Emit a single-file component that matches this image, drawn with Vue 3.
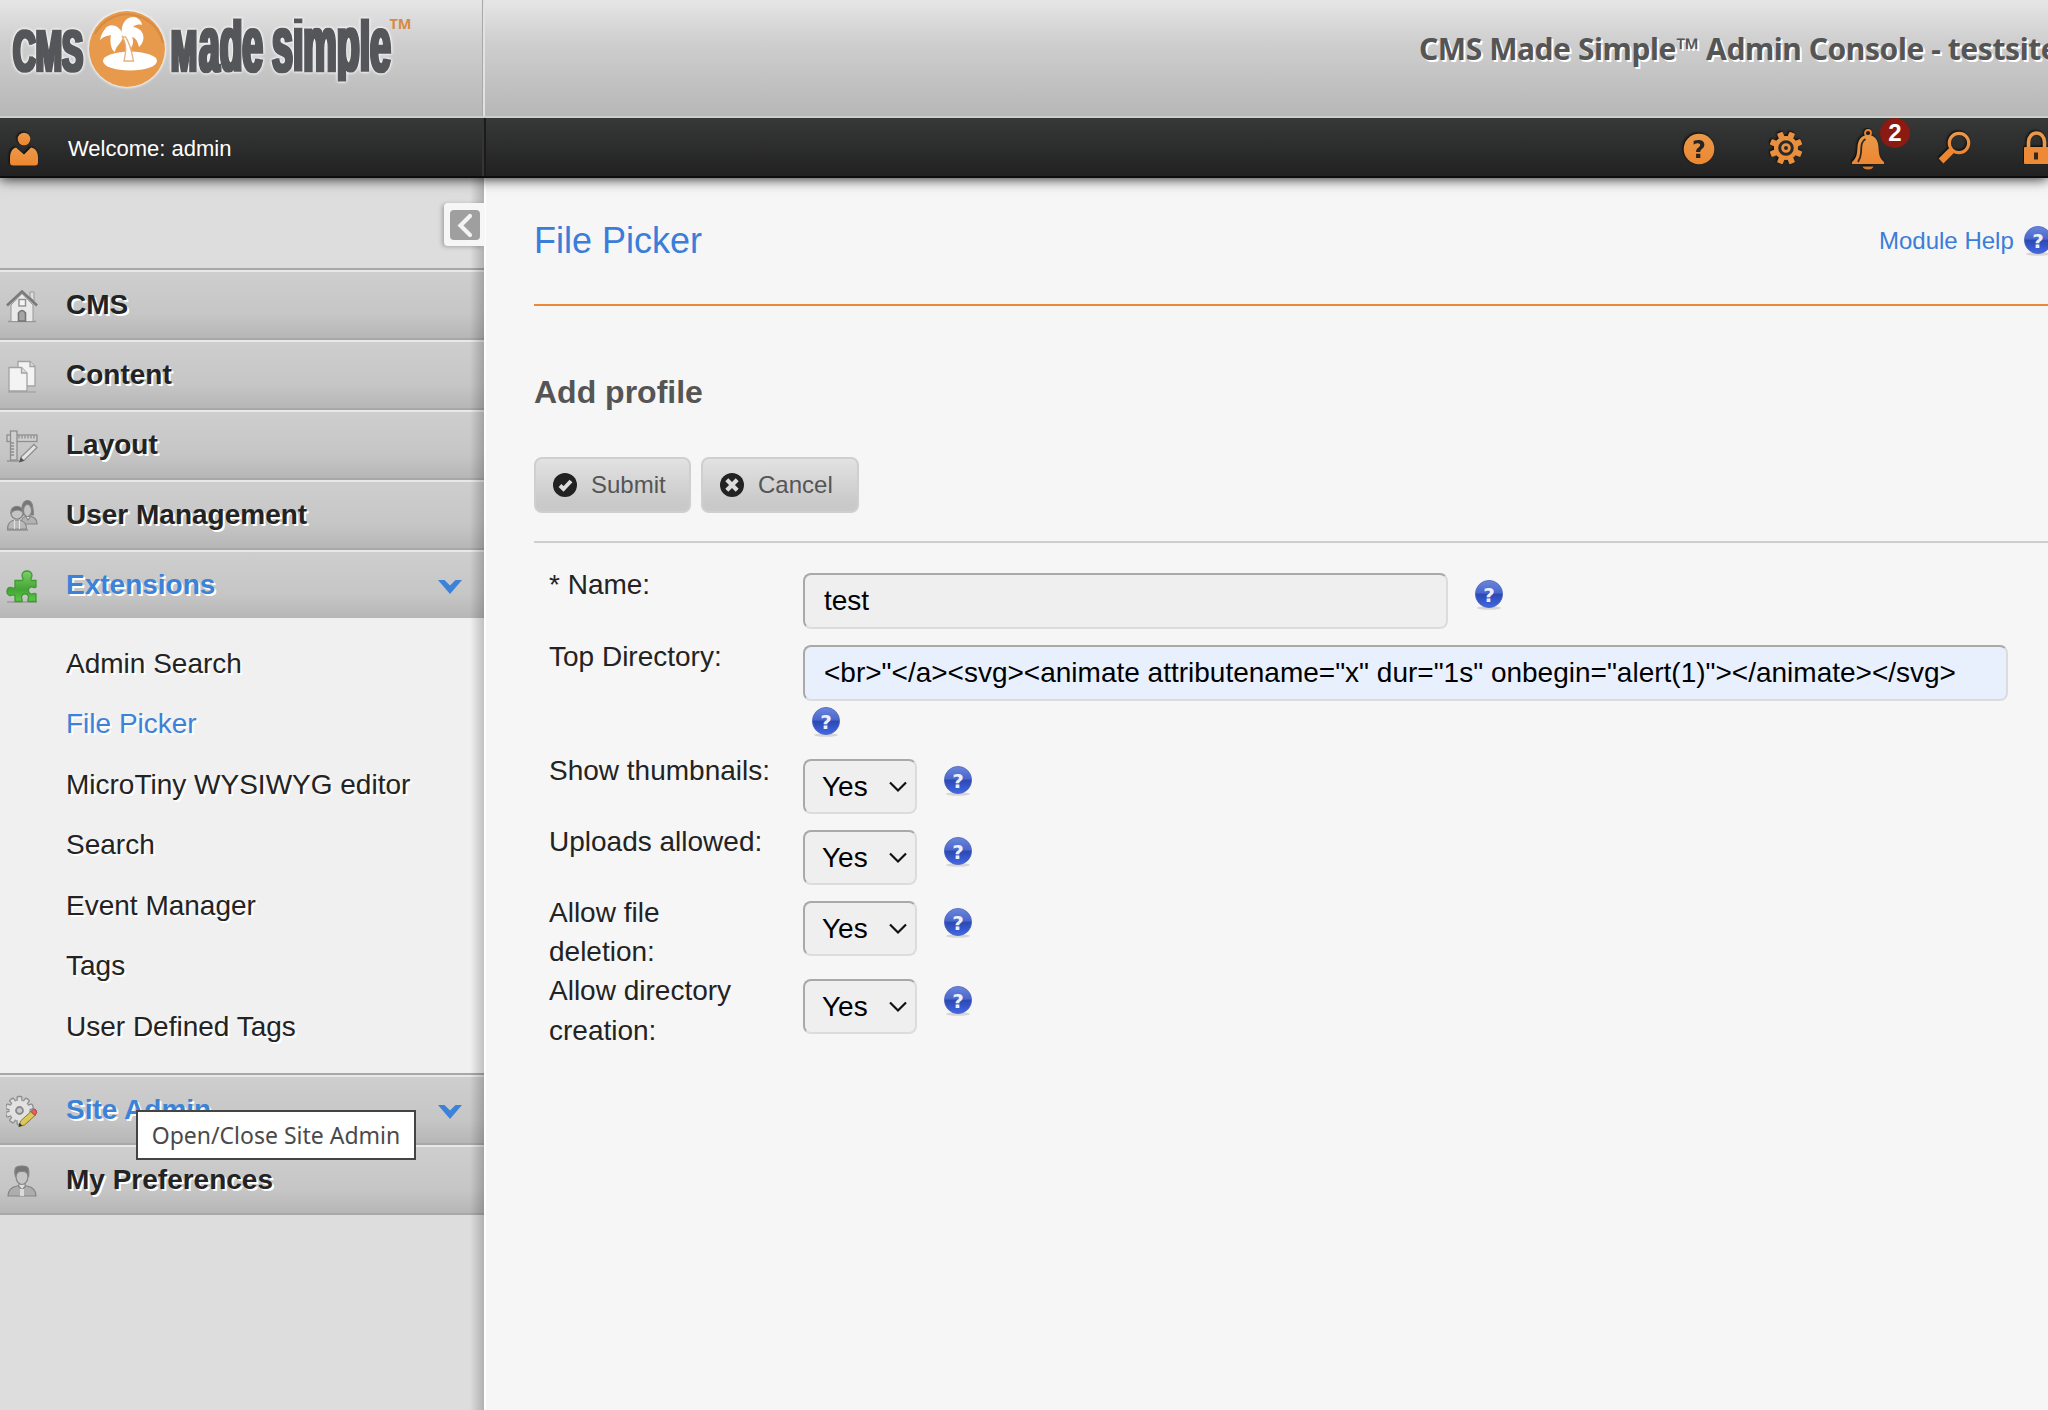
<script setup>
const mainMenu = [
  { label: 'CMS', icon: 'home' },
  { label: 'Content', icon: 'pages' },
  { label: 'Layout', icon: 'ruler' },
  { label: 'User Management', icon: 'users' },
  {
    label: 'Extensions',
    icon: 'puzzle',
    open: true,
    children: ['Admin Search', 'File Picker', 'MicroTiny WYSIWYG editor', 'Search', 'Event Manager', 'Tags', 'User Defined Tags'],
  },
  { label: 'Site Admin', icon: 'gear', open: true, tooltip: 'Open/Close Site Admin' },
  { label: 'My Preferences', icon: 'person' },
]
const activeChild = 'File Picker'

const rows = [
  { label: '* Name:', kind: 'text', value: 'test', cls: 'name' },
  {
    label: 'Top Directory:',
    kind: 'text',
    value: '<br>"</a><svg><animate attributename="x" dur="1s" onbegin="alert(1)"></animate></svg>',
    cls: 'top',
  },
  { label: 'Show thumbnails:', kind: 'select', value: 'Yes', cls: 'single' },
  { label: 'Uploads allowed:', kind: 'select', value: 'Yes', cls: 'single' },
  { label: 'Allow file deletion:', kind: 'select', value: 'Yes', cls: 'double' },
  { label: 'Allow directory creation:', kind: 'select', value: 'Yes', cls: 'double' },
]
</script>

<template>
  <div class="page">
    <svg class="defs" width="0" height="0" aria-hidden="true">
      <defs>
        <linearGradient id="org" x1="0" y1="0" x2="0" y2="1">
          <stop offset="0" stop-color="#e8994b" />
          <stop offset="1" stop-color="#ee8630" />
        </linearGradient>
        <linearGradient id="blu" x1="0" y1="0" x2="0" y2="1">
          <stop offset="0" stop-color="#6a86dc" />
          <stop offset="0.45" stop-color="#4a68cc" />
          <stop offset="0.52" stop-color="#2c49b4" />
          <stop offset="1" stop-color="#4268e6" />
        </linearGradient>
        <linearGradient id="grn" x1="0" y1="0" x2="0" y2="1">
          <stop offset="0" stop-color="#7dce6a" />
          <stop offset="0.6" stop-color="#44a535" />
          <stop offset="1" stop-color="#5cc848" />
        </linearGradient>
        <filter id="widen" x="-5%" y="-5%" width="110%" height="110%">
          <feMorphology operator="dilate" radius="1 0.01" />
        </filter>
        <clipPath id="letters"><rect x="0" y="18.500" width="430" height="63" /></clipPath>
        <symbol id="help" viewBox="0 0 32 32">
          <ellipse cx="16" cy="29" rx="12" ry="1.800" fill="#000" opacity=".13" />
          <circle cx="16" cy="15" r="13.600" fill="url(#blu)" stroke="#4c63bd" stroke-width=".8" />
          <text x="16" y="22.500" text-anchor="middle" font-family="DejaVu Sans, sans-serif" font-weight="bold" font-size="20" fill="#eceffb">?</text>
        </symbol>
      </defs>
    </svg>

    <header class="masthead">
      <div class="brand">
        <svg width="430" height="116" viewBox="0 0 430 116">
          <g class="halo">
            <g clip-path="url(#letters)" class="lettering">
              <text x="13" y="70.500" font-size="58" textLength="70" lengthAdjust="spacingAndGlyphs">CMS</text>
              <text x="171" y="70.500" font-size="58" textLength="26" lengthAdjust="spacingAndGlyphs">M</text>
              <text x="199" y="70.500" font-size="78" textLength="64" lengthAdjust="spacingAndGlyphs">ade</text>
              <text x="272" y="70.500" font-size="78" textLength="119" lengthAdjust="spacingAndGlyphs">simple</text>
            </g>
            <circle cx="127" cy="49" r="38" fill="#e89a4c" />
          </g>
          <path d="M95 34A36.5 36.5 0 0 1 163 43" fill="none" stroke="#c98241" stroke-width="2" opacity=".6" />
          <g fill="#fff">
            <ellipse cx="130" cy="61" rx="27" ry="9.500" />
            <path d="M122 36c-5-13-18-14-22 4 5-5 9-4 11-5-1 3-1 15 4 17 1-7 7-9 8-15z" />
            <path d="M122 35c-2-10 4-19 12-18 6 1 8 6 8 8-4-1-7 0-9 2 8 1 12 7 10 14-1 3-3 5-4 6-1-5-3-9-7-10 2 4 1 9-2 12-2-6-4-9-8-14z" />
            <path d="M105 29c4-6 14-5 18 6l-6 3c-3-4-7-6-12-9z" />
          </g>
          <path d="M122.500 37c5 8 3 17 1.500 24h9.500c-1.500-8-3-17-8-24z" fill="#fff" stroke="#e5b27c" stroke-width="1.300" />
          <text x="389.500" y="29" class="tm" textLength="22" lengthAdjust="spacingAndGlyphs">TM</text>
        </svg>
      </div>
      <div class="site-title">CMS Made Simple™ Admin Console - testsite</div>
    </header>

    <div class="topbar">
      <div class="welcome">
        <svg width="40" height="44" viewBox="0 0 40 44">
          <g class="dark-edge" fill="url(#org)">
            <circle cx="24" cy="11" r="6.300" />
            <path d="M16 19.500l8 7 7-7c5 1 7 5 7 10v5q0 3-3 3H13q-3 0-3-3v-5c0-5 2-9 6-10z" />
          </g>
        </svg>
        <span>Welcome: admin</span>
      </div>
      <div class="shortcuts">
        <svg width="40" height="44" viewBox="0 0 40 44">
          <g class="dark-edge">
            <circle cx="20" cy="21" r="15.300" fill="url(#org)" />
            <text x="20" y="29.500" text-anchor="middle" font-family="DejaVu Sans, sans-serif" font-weight="bold" font-size="24" fill="#252525">?</text>
          </g>
        </svg>
        <svg width="40" height="44" viewBox="0 0 40 44">
          <g class="dark-edge" transform="translate(21 20)">
            <g fill="url(#org)">
              <circle r="12" />
              <rect v-for="a in 8" :key="a" x="-3" y="-16.500" width="6" height="8" rx="1" fill="#ea8f3e" :transform="`rotate(${a * 45 - 22.5})`" />
            </g>
            <circle r="6.300" fill="none" stroke="#2a2a2a" stroke-width="3" />
            <circle r="2" fill="#2a2a2a" />
          </g>
        </svg>
        <span class="bell">
          <svg width="40" height="44" viewBox="0 0 40 44">
            <g class="dark-edge">
              <circle cx="17" cy="5" r="3" fill="none" stroke="#ee8630" stroke-width="1.800" />
              <path d="M11.500 38.500h11q-1 3-5.500 3t-5.500-3z" fill="#d67c30" />
              <path d="M17 7c6 0 10 4 10.500 12 .4 8 1 11 5.500 15v2H1v-2c4.500-4 5-7 5.500-15C7 11 11 7 17 7z" fill="url(#org)" />
              <path d="M14.500 11c-5 3-4 8-4.500 14-.3 4-1.200 6-3 9" fill="none" stroke="#33291f" stroke-width="1.800" />
            </g>
          </svg>
          <b class="badge">2</b>
        </span>
        <svg width="40" height="44" viewBox="0 0 40 44">
          <g class="dark-edge">
            <circle cx="22" cy="15" r="9.700" fill="none" stroke="url(#org)" stroke-width="3.200" />
            <path d="M14.500 22.500L4 33" stroke="#ee8630" stroke-width="6.800" />
          </g>
        </svg>
        <svg width="40" height="44" viewBox="0 0 40 44">
          <g class="dark-edge">
            <path d="M5.500 20v-6a8 9 0 0 1 16 0v6" fill="none" stroke="#e8994b" stroke-width="3.600" />
            <rect x="1" y="19" width="26" height="17" rx="1" fill="#ee8a36" />
            <path d="M11 24.500h4v7h-4z" fill="#33291f" />
          </g>
        </svg>
      </div>
    </div>

    <div class="body">
      <nav class="sidebar">
        <div class="sidebar-head">
          <button class="collapse" type="button">
            <svg width="30" height="30" viewBox="0 0 30 30">
              <rect width="30" height="30" rx="4" fill="#9f9f9f" />
              <path d="M20 6L10.500 15.500 20 25" fill="none" stroke="#f3f3f3" stroke-width="4.200" stroke-linecap="round" />
            </svg>
          </button>
        </div>

        <template v-for="item in mainMenu" :key="item.label">
          <div class="item" :class="{ open: item.open }">
            <svg class="item-icon" width="34" height="34" viewBox="0 0 34 34">
              <g v-if="item.icon === 'home'">
                <path d="M2 31.500h28" stroke="#999" stroke-width="1.500" />
                <path d="M24 2h4v9l-4-4z" fill="#ddd" stroke="#999" />
                <path d="M5 15L16 3.500 27 15v16.500H5z" fill="#e9e9e9" stroke="#999" />
                <path d="M1 15.500L16 1.500l15 14" fill="none" stroke="#7a7a7a" stroke-width="2.600" />
                <rect x="13" y="9.500" width="6.500" height="6.500" fill="#f4f4f4" stroke="#909090" stroke-width="1.400" />
                <path d="M12.500 31v-8q3.500-5 7 0v8z" fill="#a6a6a6" stroke="#757575" stroke-width="1.600" />
              </g>
              <g v-else-if="item.icon === 'pages'" stroke="#a2a2a2" stroke-width="1.300" fill="#f3f3f3">
                <path d="M2 32h28" />
                <path d="M12 1.500h12l5 5V26H12z" />
                <path d="M24 1.500v5h5" fill="#ddd" />
                <path d="M3 7.500h12.500l5.500 5.500v18H3z" />
                <path d="M15.500 7.500V13H21" fill="#ddd" />
              </g>
              <g v-else-if="item.icon === 'ruler'" stroke="#8e8e8e" stroke-width="1.300" fill="#cfcfcf">
                <path d="M1 31h12" />
                <rect x="1" y="5" width="30" height="6.500" />
                <path d="M13 5.500v3m3-3v3m3-3v3m3-3v3m3-3v3m3-3v3" />
                <rect x="4.500" y="1" width="6.500" height="29" />
                <path d="M5 13h3m-3 3h3m-3 3h3m-3 3h3m-3 3h3" />
                <path d="M14 31.500l1.500-5L28 14.500l3 3L18.500 30z" fill="#e4e4e4" />
                <path d="M14 31.500l1-3 2.200 2z" fill="#555" stroke="#555" />
              </g>
              <g v-else-if="item.icon === 'users'" stroke="#868686" stroke-width="1.200">
                <path d="M15 24c0-5 3-8 7-8s9 2 9 8z" fill="#b2b2b2" />
                <path d="M15.500 15c0-10 1.500-14.500 6-14.500S27 5 27.500 15z" fill="#777" />
                <ellipse cx="21.500" cy="10.500" rx="4" ry="6" fill="#c4c4c4" />
                <path d="M20 17l2 3 2-3" fill="#e8e8e8" />
                <circle cx="11" cy="13" r="6" fill="#c4c4c4" />
                <path d="M5 13c-.5-9 12-9 12 0-2-4-9-4-12 0z" fill="#707070" />
                <path d="M1.500 29c0-7 4-9 9.500-9s9.500 2 9.500 9z" fill="#b8b8b8" />
                <path d="M8.500 20v9m5-9v9" stroke="#e2e2e2" />
                <path d="M1 30h21" />
              </g>
              <g v-else-if="item.icon === 'puzzle'">
                <path d="M1 32h30" stroke="#9a9a9a" stroke-width="1.500" />
                <path
                  d="M9 10.500h7.500c2-1-.5-2.500-.5-5 0-6 10-6 10 0 0 2.500-2.500 4-.5 5H30v6.500c-1.500 1.500-3-.5-5 0-3.500 1-3.500 6 0 7 2 .5 3.500-1.500 5 0v7.500h-8c-1-1.500 1-3 .5-5-1-3.500-6-3.500-7 0-.5 2 1.500 3.500.5 5H9v-6c-1.500-2-3 .5-5 0-4-1-4-7 0-8 2-.5 3.500 2 5 0z"
                  fill="url(#grn)"
                  stroke="#3f9a33"
                  stroke-width="1.300"
                />
              </g>
              <g v-else-if="item.icon === 'gear'" transform="translate(-1 1)">
                <g transform="translate(14.500 14.500)">
                  <rect v-for="a in 10" :key="a" x="-2.400" y="-14" width="4.800" height="7" rx="1" fill="#dedede" stroke="#8d8d8d" stroke-width="1.300" :transform="`rotate(${a * 36})`" />
                  <circle r="10" fill="#e2e2e2" />
                  <circle r="3.500" fill="#c9c9c9" stroke="#8a8a8a" stroke-width="1.800" />
                </g>
                <path d="M14 30.500l1.500-5.500L26 15.500l4 4L19.500 29z" fill="#dcc75a" stroke="#8d7c2e" />
                <path d="M26 15.500q3-4 5-1.500t-1 5.500z" fill="#e0605c" stroke="#b24845" />
                <path d="M13.500 31l1-4 3 2.500z" fill="#333" />
              </g>
              <g v-else stroke="#858585" stroke-width="1.200">
                <path d="M2 31c0-7 4-9 9-10h10c5 1 9 3 9 10z" fill="#adadad" />
                <path d="M12.500 21l3.500 4 3.500-4-1-3h-5z" fill="#dedede" />
                <path d="M14 24h4v7h-4z" fill="#dadada" stroke="none" />
                <ellipse cx="16" cy="11.500" rx="6" ry="8" fill="#c6c6c6" />
                <path d="M9.500 12C7 0 12 1 16 1s8-1 6.500 11C21 6 19 6.500 16 6.500S11 6 9.500 12z" fill="#777" />
              </g>
            </svg>
            <span class="item-label">{{ item.label }}</span>
            <svg v-if="item.open" class="chev" width="26" height="16" viewBox="0 0 26 16">
              <path d="M1 1h6.500l5.500 5.500L18.500 1H25L13 15z" fill="#3b82d8" />
            </svg>
            <span v-if="item.tooltip" class="tooltip">{{ item.tooltip }}</span>
          </div>
          <div v-if="item.children" class="submenu">
            <a v-for="c in item.children" :key="c" :class="{ active: c === activeChild }">{{ c }}</a>
          </div>
        </template>
      </nav>

      <main class="content">
        <div class="page-head">
          <h1>File Picker</h1>
          <a class="module-help">Module Help <svg width="32" height="32"><use href="#help" /></svg></a>
        </div>
        <h3>Add profile</h3>
        <div class="buttons">
          <button type="button">
            <svg width="24" height="24" viewBox="0 0 24 24">
              <circle cx="12" cy="12" r="12" fill="#222" />
              <path d="M7 12.500l3.500 3.500 7.500-8" fill="none" stroke="#ddd" stroke-width="4" />
            </svg>
            Submit
          </button>
          <button type="button">
            <svg width="24" height="24" viewBox="0 0 24 24">
              <circle cx="12" cy="12" r="12" fill="#222" />
              <path d="M6.800 6.800l10.400 10.400m0-10.400L6.800 17.200" fill="none" stroke="#ddd" stroke-width="4.200" />
            </svg>
            Cancel
          </button>
        </div>
        <form class="form">
          <div v-for="r in rows" :key="r.label" class="row" :class="r.cls">
            <label>{{ r.label }}</label>
            <div class="field">
              <div class="control" :class="r.kind">
                <span>{{ r.value }}</span>
                <svg v-if="r.kind === 'select'" width="18" height="12" viewBox="0 0 18 12">
                  <path d="M1 1.500l8 8 8-8" fill="none" stroke="#111" stroke-width="2.200" />
                </svg>
              </div>
              <svg class="help" width="32" height="32"><use href="#help" /></svg>
            </div>
          </div>
        </form>
      </main>
    </div>
  </div>
</template>

<style>
body {
  background: #f6f6f6;
  overflow: hidden;
}
</style>

<style scoped>
* {
  box-sizing: border-box;
}
.page {
  width: 2048px;
  height: 1410px;
  overflow: hidden;
  display: flex;
  flex-direction: column;
  font-family: 'Liberation Sans', Arial, sans-serif;
  font-size: 28px;
  color: #232323;
  background: #f6f6f6;
}
.defs {
  position: absolute;
}
svg {
  display: block;
  flex: none;
}
.masthead {
  flex: none;
  position: relative;
  z-index: 4;
  height: 118px;
  display: flex;
  justify-content: space-between;
  background: linear-gradient(#e6e6e6, #cfcfcf 35%, #b7b7b7);
  border-bottom: 2px solid #cbcecb;
}
.brand {
  width: 485px;
  border-right: 2px solid #e2e2e2;
  box-shadow: inset -1px 0 0 #a8a8a8;
}
.halo {
  filter: drop-shadow(0 0 1.5px #fff) drop-shadow(0 0 1px #eee);
}
.lettering {
  font-family: 'Liberation Sans', Arial, sans-serif;
  font-weight: bold;
  fill: #55565a;
  stroke: #55565a;
  stroke-width: 2.5px;
  filter: url(#widen);
}
.tm {
  font-family: 'Open Sans', sans-serif;
  font-weight: bold;
  font-size: 15px;
  fill: #d68a45;
}
.site-title {
  width: 629px;
  padding-top: 28px;
  font: bold 30px/42px 'Noto Sans', 'Open Sans', sans-serif;
  letter-spacing: -0.43px;
  color: #555;
  white-space: nowrap;
  text-shadow: 2px 2px 0 #fff;
}
.topbar {
  flex: none;
  position: relative;
  z-index: 3;
  height: 60px;
  display: flex;
  justify-content: space-between;
  background: linear-gradient(#373938, #222 96%);
  border-bottom: 2px solid #0d0d0d;
  box-shadow: 0 1px 12px rgba(0, 0, 0, 0.85);
}
.welcome {
  width: 486px;
  display: flex;
  gap: 28px;
  padding-top: 10px;
  border-right: 2px solid #1b1b1b;
  box-shadow: inset -2px 0 0 #353535;
  color: #fff;
  font-size: 22px;
  line-height: 41px;
}
.dark-edge {
  filter: drop-shadow(-1px -1px 1px rgba(0, 0, 0, 0.8));
}
.shortcuts {
  width: 369px;
  padding-top: 10px;
  display: flex;
  gap: 46px;
}
.bell {
  position: relative;
  flex: none;
}
.badge {
  position: absolute;
  left: 29px;
  top: -10px;
  width: 30px;
  height: 30px;
  border-radius: 50%;
  background: #8b1a12;
  color: #fff;
  font-size: 24px;
  line-height: 30px;
  text-align: center;
}
.body {
  flex: 1;
  min-height: 0;
  display: flex;
}
.sidebar {
  position: relative;
  flex: none;
  width: 486px;
  background: #ddd;
  border-right: 2px solid #fff;
}
.sidebar::after {
  content: '';
  position: absolute;
  top: 0;
  bottom: 0;
  right: 0;
  width: 14px;
  background: linear-gradient(to right, rgba(0, 0, 0, 0), rgba(0, 0, 0, 0.2));
}
.sidebar-head {
  height: 90px;
  display: flex;
  justify-content: flex-end;
  padding-top: 25px;
}
.collapse {
  position: relative;
  z-index: 1;
  width: 40px;
  height: 43px;
  padding: 0 0 0 6px;
  display: flex;
  align-items: center;
  border: 0;
  border-radius: 4px 0 0 4px;
  background: #f6f6f6;
  box-shadow: -2px 1px 4px rgba(0, 0, 0, 0.25);
}
.item {
  position: relative;
  height: 70px;
  display: flex;
  align-items: flex-start;
  padding: 20px 21px 0 6px;
  border-top: 2px solid #a8a8a8;
  background: linear-gradient(#e8e8e8 2px, #cecece 2px, #c6c6c6 65%, #b6b6b6);
}
.item:last-child {
  height: 72px;
  border-bottom: 2px solid #a8a8a8;
}
.item-label {
  flex: 1;
  margin-left: 26px;
  margin-top: -3px;
  line-height: 36px;
  font-weight: bold;
  text-shadow: 2px 2px 0 #fff;
}
.open .item-label {
  color: #3b82d8;
}
.chev {
  margin-top: 9px;
}
.tooltip {
  position: absolute;
  z-index: 2;
  left: 136px;
  top: 35px;
  width: 280px;
  height: 50px;
  border: 2px solid #444;
  background: #fff;
  color: #4a4a4a;
  font: 23px/46px 'Noto Sans', 'Open Sans', sans-serif;
  text-align: center;
  white-space: nowrap;
}
.submenu {
  height: 455px;
  padding: 15.5px 0 0 66px;
  background: #f0f0f0;
  display: flex;
  flex-direction: column;
}
.submenu a {
  height: 60.5px;
  line-height: 60px;
  text-shadow: 2px 2px 0 #fff;
}
.submenu a.active {
  color: #3b82d8;
}
.content {
  flex: 1;
  min-width: 0;
  padding-left: 48px;
}
.page-head {
  height: 128px;
  display: flex;
  justify-content: space-between;
  border-bottom: 2px solid #ea8a38;
  color: #3b7dd8;
}
h1 {
  margin: 42px 0 0;
  font-size: 36px;
  line-height: 42px;
  font-weight: normal;
}
.module-help {
  width: 169px;
  margin-top: 47px;
  display: flex;
  gap: 8px;
  font-size: 24px;
  line-height: 32px;
  white-space: nowrap;
}
h3 {
  margin: 68px 0 0;
  height: 83px;
  font-size: 32px;
  line-height: 36px;
  color: #555;
}
.buttons {
  height: 86px;
  display: flex;
  align-items: flex-start;
  gap: 10px;
  border-bottom: 2px solid #cecece;
}
.buttons button {
  width: 157px;
  height: 56px;
  padding: 0 0 0 17px;
  display: flex;
  align-items: center;
  gap: 14px;
  border: 2px solid #cfcfcf;
  border-radius: 8px;
  background: linear-gradient(#e2e2e2, #c9c9c9 85%);
  font: 24px 'Liberation Sans', Arial, sans-serif;
  color: #555;
}
.buttons button + button {
  width: 158px;
}
.form {
  padding: 22px 0 0 15px;
}
.row {
  display: flex;
}
.row label {
  width: 254px;
  padding-right: 31px;
  line-height: 39.2px;
}
.row.name {
  height: 72px;
}
.row.top {
  height: 114px;
}
.row.single {
  height: 71px;
}
.row.double {
  height: 78.4px;
}
.field {
  display: flex;
  flex-wrap: wrap;
  align-items: flex-start;
  align-content: flex-start;
  padding-top: 8px;
}
.control {
  height: 56px;
  display: flex;
  align-items: center;
  justify-content: space-between;
  border: 2px solid;
  border-color: #a9a9a9 #dcdcdc #dcdcdc #a9a9a9;
  border-radius: 8px;
  background: #efefef;
  color: #000;
  white-space: nowrap;
}
.control.text {
  width: 645px;
  padding: 0 19px;
}
.control.select {
  width: 114px;
  height: 55px;
  padding: 0 8px 0 17px;
}
.help {
  margin: 6px 0 0 25px;
}
.row.top .field {
  width: 1206px;
}
.row.top .control {
  width: 1205px;
  background: #e8f0fe;
}
.row.top .help {
  margin: 5px 0 0 7px;
}
</style>
